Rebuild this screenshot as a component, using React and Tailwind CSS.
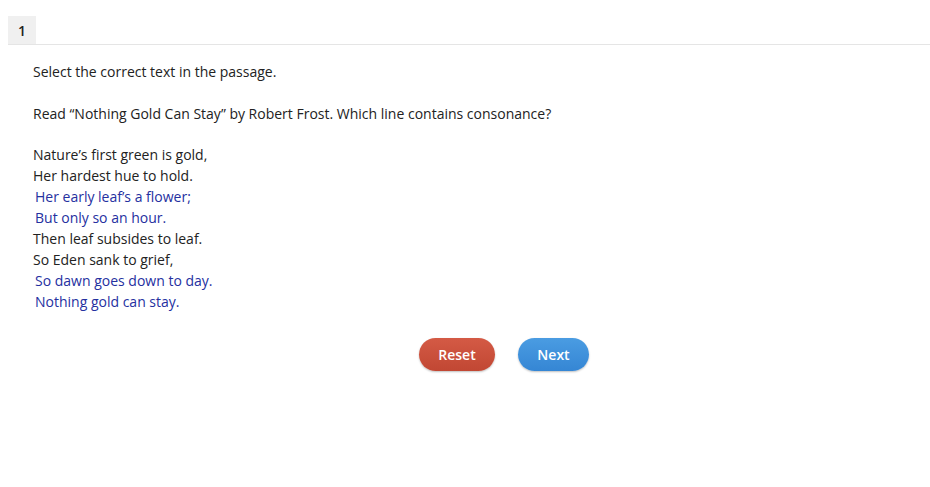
export default function App() {
  const f = { fontFamily: '"Open Sans", "Noto Sans", sans-serif' };
  const lines = [
    ["Nature’s first green is gold,", false],
    ["Her hardest hue to hold.", false],
    ["Her early leaf’s a flower;", true],
    ["But only so an hour.", true],
    ["Then leaf subsides to leaf.", false],
    ["So Eden sank to grief,", false],
    ["So dawn goes down to day.", true],
    ["Nothing gold can stay.", true],
  ];
  return (
    <div className="bg-white w-[930px] h-[487px] pt-4" style={f}>
      <div className="ml-2 flex border-b border-[#e5e5e5]">
        <div className="w-[28px] h-[28px] bg-[#f0f0f0] flex items-center justify-center text-[14px] font-semibold text-[#222]">1</div>
      </div>
      <div className="pl-[33px] pt-[16px] text-[14px] text-[#222] leading-[21px]">
        <p>Select the correct text in the passage.</p>
        <p className="mt-[21px]">Read “Nothing Gold Can Stay” by Robert Frost. Which line contains consonance?</p>
        <div className="mt-[20px]">
          {lines.map(([t, b], i) => (
            <div key={i} className={b ? "text-[#25309f] pl-[2px]" : ""}>{t}</div>
          ))}
        </div>
        <div className="flex gap-[23px] pl-[386px] mt-[26px]">
          <button className="w-[76px] h-[33px] rounded-full bg-gradient-to-b from-[#d45a45] to-[#c14733] text-white text-[14px] font-semibold shadow-[0_1px_2px_rgba(0,0,0,0.25)]">Reset</button>
          <button className="w-[71px] h-[33px] rounded-full bg-gradient-to-b from-[#4a9ce2] to-[#3586d4] text-white text-[14px] font-semibold shadow-[0_1px_2px_rgba(0,0,0,0.25)]">Next</button>
        </div>
      </div>
    </div>
  );
}
